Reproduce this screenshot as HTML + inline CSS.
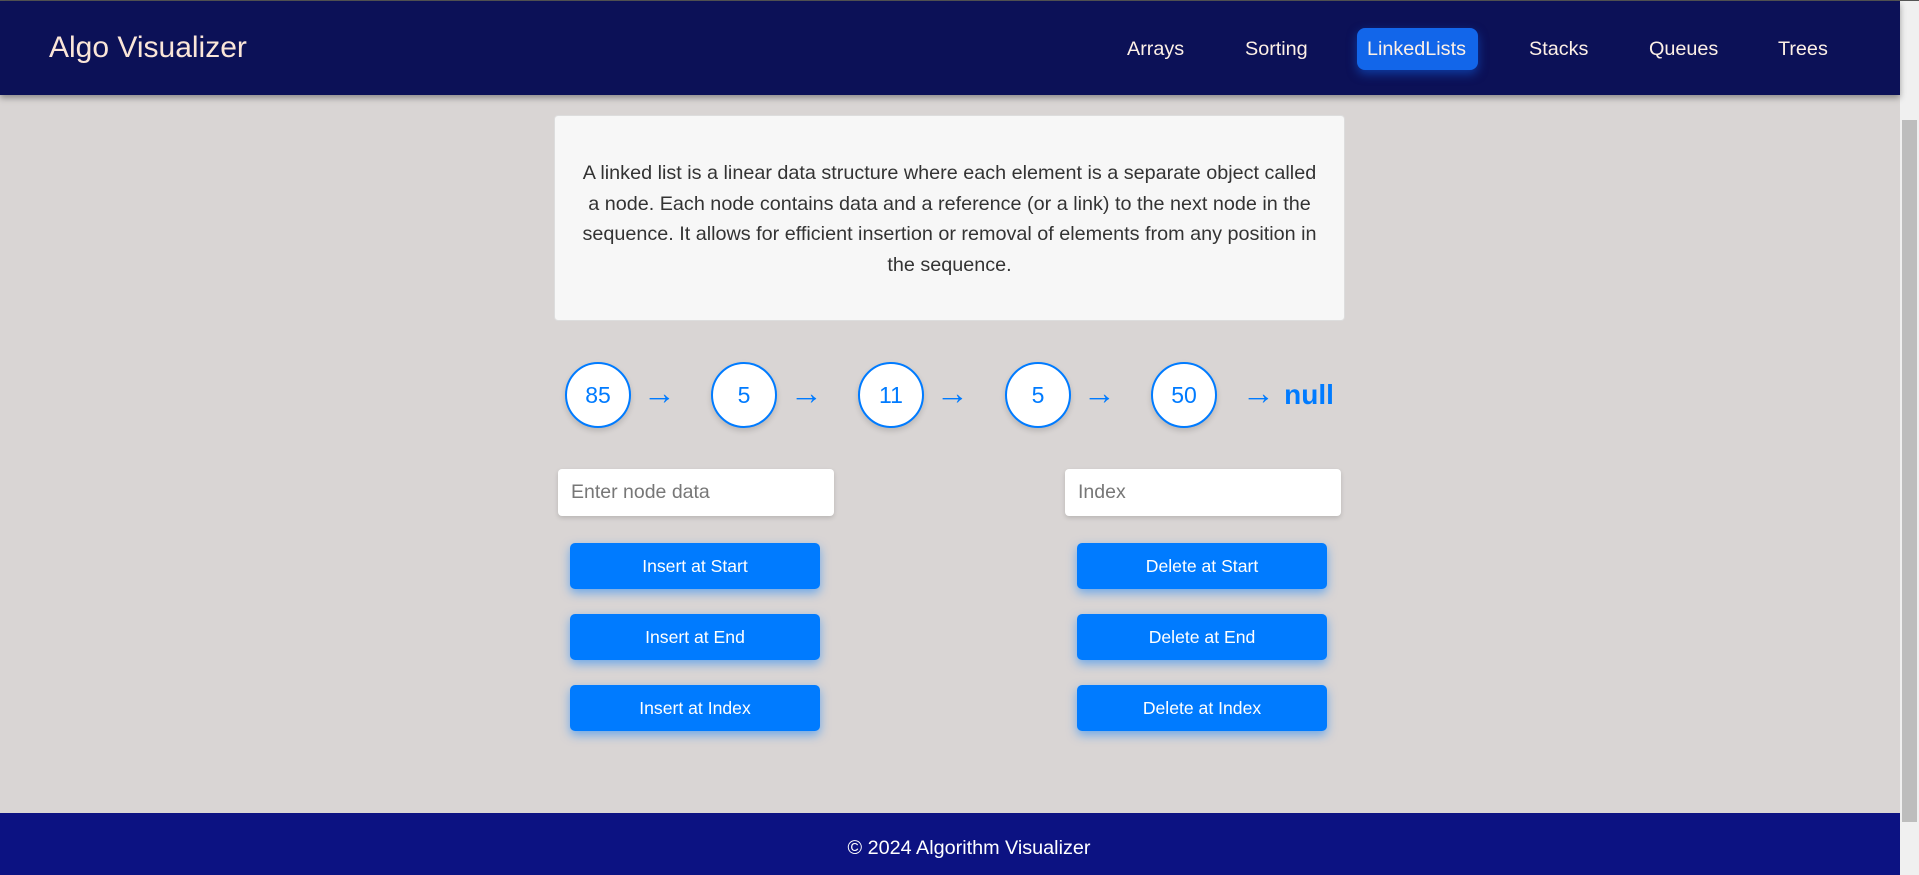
<!DOCTYPE html>
<html><head><meta charset="utf-8"><style>
*{box-sizing:border-box;margin:0;padding:0}
body{width:1919px;height:875px;overflow:hidden;background:#d9d5d4;font-family:"Liberation Sans",Arial,sans-serif;position:relative}
.top{position:absolute;left:0;top:0;width:1919px;height:1px;background:#555}
header{position:absolute;left:0;top:1px;width:1900px;height:94px;background:#0c1157;box-shadow:0 3px 6px rgba(0,0,0,.35);z-index:2}
.logo{position:absolute;left:49px;top:30px;font-size:30px;color:#fbe6d8}
.nav a{position:absolute;top:27px;height:42px;line-height:42px;font-size:19.8px;color:#fdf0e6;text-decoration:none}
.nav a.act{background:#1266ea;border-radius:8px;padding:0 10px;box-shadow:0 4px 10px rgba(18,102,234,.5)}
.sb{position:absolute;right:0;top:1px;width:19px;height:874px;background:#f0f0f0}
.thumb{position:absolute;right:2px;top:119px;width:15px;height:702px;background:#bdbdbd}
.desc{position:absolute;left:554px;top:115px;width:791px;height:206px;background:#f7f7f7;border:1px solid #ddd;border-radius:4px;padding:42px 27px 0;text-align:center;font-size:19.8px;line-height:30.5px;color:#333}
.node{position:absolute;top:362px;width:66px;height:66px;border:2px solid #007bff;border-radius:50%;background:#fff;text-align:center;line-height:62px;font-size:23px;color:#007bff;box-shadow:0 3px 6px rgba(0,0,0,.15)}
.arr{position:absolute;top:374px;font-size:33px;color:#007bff}
.null{position:absolute;left:1242px;top:374px;font-size:33px;color:#007bff}
.null b{font-size:28px}
input{position:absolute;top:469px;width:276px;height:47px;border:none;border-radius:4px;background:#fff;padding-left:13px;font-size:19.5px;font-family:"Liberation Sans",sans-serif;box-shadow:0 2px 5px rgba(0,0,0,.15)}
input::placeholder{color:#777}
.btn{position:absolute;width:250px;height:46px;background:#007bff;border-radius:5px;color:#fff;text-align:center;line-height:46px;font-size:17.6px;box-shadow:0 4px 10px rgba(0,123,255,.5)}
footer{position:absolute;left:0;top:813px;width:1900px;height:62px;background:#0c1282;color:#fff;text-align:center;line-height:53px;padding-top:9px;padding-left:38px;font-size:19.8px;overflow:hidden}
</style></head><body>
<div class="top"></div>
<header><div class="logo">Algo Visualizer</div>
<div class="nav">
<a style="left:1127px">Arrays</a><a style="left:1245px">Sorting</a><a class="act" style="left:1357px;width:121px">LinkedLists</a><a style="left:1529px">Stacks</a><a style="left:1649px">Queues</a><a style="left:1778px">Trees</a>
</div></header>
<div class="sb"><div class="thumb"></div></div>
<div class="desc">A linked list is a linear data structure where each element is a separate object called a node. Each node contains data and a reference (or a link) to the next node in the sequence. It allows for efficient insertion or removal of elements from any position in the sequence.</div>
<div class="node" style="left:565px">85</div><div class="arr" style="left:643px">→</div>
<div class="node" style="left:711px">5</div><div class="arr" style="left:790px">→</div>
<div class="node" style="left:858px">11</div><div class="arr" style="left:936px">→</div>
<div class="node" style="left:1005px">5</div><div class="arr" style="left:1083px">→</div>
<div class="node" style="left:1151px">50</div>
<div class="null">→ <b>null</b></div>
<input style="left:558px" placeholder="Enter node data">
<input style="left:1065px" placeholder="Index">
<div class="btn" style="left:570px;top:543px">Insert at Start</div>
<div class="btn" style="left:570px;top:614px">Insert at End</div>
<div class="btn" style="left:570px;top:685px">Insert at Index</div>
<div class="btn" style="left:1077px;top:543px">Delete at Start</div>
<div class="btn" style="left:1077px;top:614px">Delete at End</div>
<div class="btn" style="left:1077px;top:685px">Delete at Index</div>
<footer>© 2024 Algorithm Visualizer</footer>
</body></html>
